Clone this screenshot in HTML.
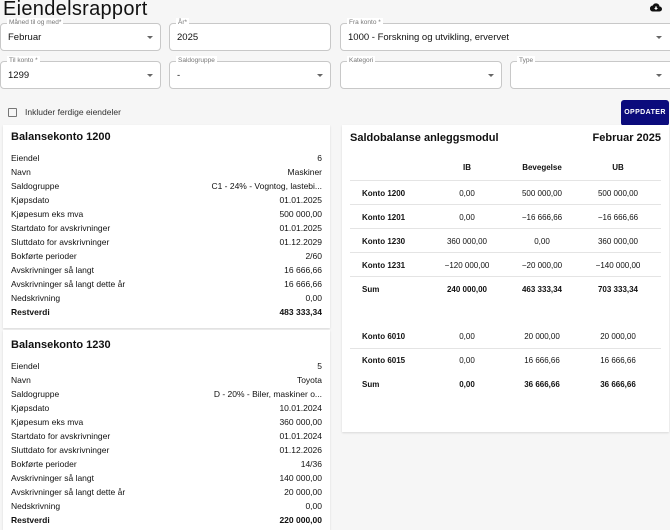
<!DOCTYPE html>
<html><head><meta charset="utf-8"><style>
*{box-sizing:border-box;margin:0;padding:0}
body{width:670px;height:525px;overflow:hidden;background:#f6f6f6;font-family:"Liberation Sans",sans-serif;color:#111;position:relative}
.a{position:absolute}
h1{position:absolute;left:3px;top:-2px;font-size:20px;line-height:22px;font-weight:normal;letter-spacing:0.3px}
.f{position:absolute;border:1px solid #c8c8c8;border-radius:4px;background:#fff;height:28px}
.f .l{position:absolute;top:-6px;left:6px;font-size:6.5px;color:#777;background:#fff;padding:0 2px;line-height:10px}
.f .v{position:absolute;left:7px;top:8px;font-size:9.5px}
.f .ar{position:absolute;right:7px;top:12px;width:0;height:0;border-left:3px solid transparent;border-right:3px solid transparent;border-top:3px solid #666}
.card{position:absolute;background:#fff;box-shadow:0 1px 2px rgba(0,0,0,.12)}
.r{position:absolute;left:8px;right:8px;font-size:8.5px;display:flex;justify-content:space-between;line-height:12px}
.b{font-weight:bold}
.tt{position:absolute;font-size:11px;font-weight:bold}
.t{position:absolute;font-size:8px;line-height:10px}
.c{text-align:center;width:80px}
.ln{position:absolute;left:8px;right:8px;height:1px;background:#e4e4e4}
</style></head><body>
<h1>Eiendelsrapport</h1>
<svg class="a" style="left:650px;top:3px" width="12" height="9" viewBox="0 0 24 18"><path d="M19 7A7 7 0 0 0 5.6 5 6 6 0 0 0 6 17h13a5 5 0 0 0 0-10z" fill="#111"/><path d="M12 14l-4-4h2.5V7h3v3H16z" fill="#fff"/></svg>

<div class="f" style="left:0;top:23px;width:161px"><span class="l">Måned til og med*</span><span class="v">Februar</span><span class="ar"></span></div>
<div class="f" style="left:169px;top:23px;width:162px"><span class="l">År*</span><span class="v">2025</span></div>
<div class="f" style="left:340px;top:23px;width:335px"><span class="l">Fra konto *</span><span class="v">1000 - Forskning og utvikling, ervervet</span><span class="ar" style="right:12px"></span></div>
<div class="f" style="left:0;top:61px;width:161px"><span class="l">Til konto *</span><span class="v">1299</span><span class="ar"></span></div>
<div class="f" style="left:169px;top:61px;width:162px"><span class="l">Saldogruppe</span><span class="v">-</span><span class="ar"></span></div>
<div class="f" style="left:340px;top:61px;width:162px"><span class="l">Kategori</span><span class="ar"></span></div>
<div class="f" style="left:510px;top:61px;width:165px"><span class="l">Type</span><span class="ar" style="right:12px"></span></div>

<div class="a" style="left:8px;top:108px;width:9px;height:9px;border:1px solid #777;border-radius:1px"></div>
<div class="a" style="left:25px;top:107px;font-size:8.5px;color:#333">Inkluder ferdige eiendeler</div>
<div class="a" style="left:621px;top:100px;width:48px;height:26px;background:#0b0b7c;border-radius:3px;color:#fff;font-size:7px;font-weight:bold;letter-spacing:.4px;text-align:center;line-height:26px">OPPDATER</div>

<div class="card" style="left:3px;top:125px;width:327px;height:203px">
<div class="tt" style="left:8px;top:6px">Balansekonto 1200</div>
<div class="r" style="top:27px"><span>Eiendel</span><span>6</span></div>
<div class="r" style="top:41px"><span>Navn</span><span>Maskiner</span></div>
<div class="r" style="top:55px"><span>Saldogruppe</span><span>C1 - 24% - Vogntog, lastebi...</span></div>
<div class="r" style="top:69px"><span>Kjøpsdato</span><span>01.01.2025</span></div>
<div class="r" style="top:83px"><span>Kjøpesum eks mva</span><span>500 000,00</span></div>
<div class="r" style="top:97px"><span>Startdato for avskrivninger</span><span>01.01.2025</span></div>
<div class="r" style="top:111px"><span>Sluttdato for avskrivninger</span><span>01.12.2029</span></div>
<div class="r" style="top:125px"><span>Bokførte perioder</span><span>2/60</span></div>
<div class="r" style="top:139px"><span>Avskrivninger så langt</span><span>16 666,66</span></div>
<div class="r" style="top:153px"><span>Avskrivninger så langt dette år</span><span>16 666,66</span></div>
<div class="r" style="top:167px"><span>Nedskrivning</span><span>0,00</span></div>
<div class="r b" style="top:181px"><span>Restverdi</span><span>483 333,34</span></div>
</div>
<div class="card" style="left:3px;top:330px;width:327px;height:200px">
<div class="tt" style="left:8px;top:9px">Balansekonto 1230</div>
<div class="r" style="top:30px"><span>Eiendel</span><span>5</span></div>
<div class="r" style="top:44px"><span>Navn</span><span>Toyota</span></div>
<div class="r" style="top:58px"><span>Saldogruppe</span><span>D - 20% - Biler, maskiner o...</span></div>
<div class="r" style="top:72px"><span>Kjøpsdato</span><span>10.01.2024</span></div>
<div class="r" style="top:86px"><span>Kjøpesum eks mva</span><span>360 000,00</span></div>
<div class="r" style="top:100px"><span>Startdato for avskrivninger</span><span>01.01.2024</span></div>
<div class="r" style="top:114px"><span>Sluttdato for avskrivninger</span><span>01.12.2026</span></div>
<div class="r" style="top:128px"><span>Bokførte perioder</span><span>14/36</span></div>
<div class="r" style="top:142px"><span>Avskrivninger så langt</span><span>140 000,00</span></div>
<div class="r" style="top:156px"><span>Avskrivninger så langt dette år</span><span>20 000,00</span></div>
<div class="r" style="top:170px"><span>Nedskrivning</span><span>0,00</span></div>
<div class="r b" style="top:184px"><span>Restverdi</span><span>220 000,00</span></div>
</div>

<div class="card" style="left:342px;top:125px;width:327px;height:307px">
<div class="tt" style="left:8px;top:7px">Saldobalanse anleggsmodul</div>
<div class="tt" style="right:8px;top:7px">Februar 2025</div>
<div class="t b c" style="left:85px;top:38px">IB</div>
<div class="t b c" style="left:160px;top:38px">Bevegelse</div>
<div class="t b c" style="left:236px;top:38px">UB</div>
<div class="ln" style="top:55px"></div>
<div class="t b" style="left:20px;top:64px">Konto 1200</div><div class="t c" style="left:85px;top:64px">0,00</div><div class="t c" style="left:160px;top:64px">500 000,00</div><div class="t c" style="left:236px;top:64px">500 000,00</div>
<div class="ln" style="top:79px"></div>
<div class="t b" style="left:20px;top:88px">Konto 1201</div><div class="t c" style="left:85px;top:88px">0,00</div><div class="t c" style="left:160px;top:88px">−16 666,66</div><div class="t c" style="left:236px;top:88px">−16 666,66</div>
<div class="ln" style="top:103px"></div>
<div class="t b" style="left:20px;top:112px">Konto 1230</div><div class="t c" style="left:85px;top:112px">360 000,00</div><div class="t c" style="left:160px;top:112px">0,00</div><div class="t c" style="left:236px;top:112px">360 000,00</div>
<div class="ln" style="top:127px"></div>
<div class="t b" style="left:20px;top:136px">Konto 1231</div><div class="t c" style="left:85px;top:136px">−120 000,00</div><div class="t c" style="left:160px;top:136px">−20 000,00</div><div class="t c" style="left:236px;top:136px">−140 000,00</div>
<div class="ln" style="top:151px"></div>
<div class="t b" style="left:20px;top:160px">Sum</div><div class="t b c" style="left:85px;top:160px">240 000,00</div><div class="t b c" style="left:160px;top:160px">463 333,34</div><div class="t b c" style="left:236px;top:160px">703 333,34</div>
<div class="t b" style="left:20px;top:207px">Konto 6010</div><div class="t c" style="left:85px;top:207px">0,00</div><div class="t c" style="left:160px;top:207px">20 000,00</div><div class="t c" style="left:236px;top:207px">20 000,00</div>
<div class="ln" style="top:223px"></div>
<div class="t b" style="left:20px;top:231px">Konto 6015</div><div class="t c" style="left:85px;top:231px">0,00</div><div class="t c" style="left:160px;top:231px">16 666,66</div><div class="t c" style="left:236px;top:231px">16 666,66</div>
<div class="t b" style="left:20px;top:255px">Sum</div><div class="t b c" style="left:85px;top:255px">0,00</div><div class="t b c" style="left:160px;top:255px">36 666,66</div><div class="t b c" style="left:236px;top:255px">36 666,66</div>
</div>
</body></html>
